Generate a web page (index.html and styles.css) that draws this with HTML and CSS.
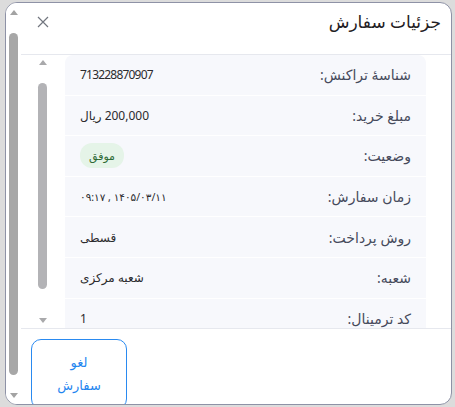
FILE: index.html
```html
<!DOCTYPE html>
<html lang="fa">
<head>
<meta charset="utf-8">
<title>جزئیات سفارش</title>
<link rel="stylesheet" href="styles.css">
</head>
<body>
<div class="dialog">
  <div class="vscroll vscroll-outer" aria-hidden="true">
    <span class="sb-up"></span>
    <span class="sb-thumb"></span>
    <span class="sb-down"></span>
  </div>
  <div class="dlg-content" dir="rtl">
    <div class="dlg-header">
      <h2 class="dlg-title">جزئیات سفارش</h2>
      <button class="close-btn" aria-label="بستن">
        <svg width="12" height="12" viewBox="0 0 12 12"><path d="M1 1 L11 11 M11 1 L1 11" stroke="#72767f" stroke-width="1.2" fill="none"/></svg>
      </button>
    </div>
    <div class="dlg-body" dir="ltr">
      <div class="vscroll vscroll-inner" aria-hidden="true">
        <span class="sb-up"></span>
        <span class="sb-thumb"></span>
        <span class="sb-down"></span>
      </div>
      <div class="body-view" dir="rtl">
        <div class="rows">
          <div class="row"><span class="label">شناسهٔ تراکنش:</span><span class="value value-id">713228870907</span></div>
          <div class="row"><span class="label">مبلغ خرید:</span><span class="value">200,000 ریال</span></div>
          <div class="row"><span class="label">وضعیت:</span><span class="badge">موفق</span></div>
          <div class="row"><span class="label">زمان سفارش:</span><span class="value value-date">۱۴۰۵/۰۳/۱۱ , ۰۹:۱۷</span></div>
          <div class="row"><span class="label">روش پرداخت:</span><span class="value">قسطی</span></div>
          <div class="row"><span class="label">شعبه:</span><span class="value">شعبه مرکزی</span></div>
          <div class="row"><span class="label">کد ترمینال:</span><span class="value">1</span></div>
        </div>
      </div>
    </div>
    <div class="dlg-footer">
      <button class="cancel-btn">لغو سفارش</button>
    </div>
  </div>
</div>
</body>
</html>
```

FILE: styles.css
```css
* { box-sizing: border-box; }
html, body { margin: 0; }
body {
  background: #dcdcdc;
  padding: 2px 3px 0 5px;
  height: 407px;
  overflow: hidden;
  font-family: "Noto Sans", "DejaVu Sans", sans-serif;
}
.dialog {
  width: 447px;
  height: 403px;
  background: #fff;
  border: 1px solid #8e92a6;
  border-radius: 12px;
  overflow: hidden;
  display: flex;
}

/* drawn scrollbars */
.vscroll {
  width: 15px;
  flex: none;
  display: flex;
  flex-direction: column;
  align-items: center;
  background: #fff;
}
.sb-up, .sb-down {
  width: 0;
  height: 0;
  border-left: 4.5px solid transparent;
  border-right: 4.5px solid transparent;
}
.sb-up { border-bottom: 5px solid #a3a3a3; }
.sb-down { border-top: 5px solid #a3a3a3; margin-top: auto; }
.sb-thumb {
  width: 9px;
  border-radius: 4.5px;
  background: #a7a7a7;
}
.vscroll-outer .sb-up { margin-top: 7px; }
.vscroll-outer .sb-thumb { margin-top: 18px; height: 342px; }
.vscroll-outer .sb-down { margin-bottom: 6px; }
.vscroll-inner .sb-up { margin-top: 5px; border-bottom-color: #a9a9ab; }
.vscroll-inner .sb-thumb { margin-top: 18px; height: 206px; background: #b3b3b6; }
.vscroll-inner .sb-down { margin-bottom: 5px; border-top-color: #a9a9ab; }

.dlg-content {
  flex: 1;
  min-width: 0;
  overflow: hidden;
  display: flex;
  flex-direction: column;
}
.dlg-header {
  display: flex;
  align-items: center;
  justify-content: space-between;
  padding: 7px 10px 20px 16px;
  border-bottom: 1px solid #e6e8ee;
  flex: none;
}
.dlg-title {
  margin: 0;
  font-size: 17px;
  line-height: 24px;
  font-weight: 400;
  color: #1f2024;
}
.close-btn {
  border: 0;
  background: none;
  padding: 0;
  width: 12px;
  height: 12px;
  display: flex;
}
.dlg-body {
  height: 273px;
  flex: none;
  margin: 0 14px;
  display: flex;
}
.body-view {
  flex: 1;
  min-width: 0;
  overflow: hidden;
}
.rows {
  margin: 0 11px 0 15px;
  background: #f7f8fc;
  border-radius: 8px;
}
.row {
  height: 40.6px;
  display: flex;
  align-items: center;
  justify-content: space-between;
  padding: 0 15px;
  border-bottom: 1px solid #ffffff;
}
.label {
  font-size: 14px;
  color: #464a5b;
}
.value {
  font-size: 12px;
  color: #2b2b2e;
}
.value-id { letter-spacing: -0.8px; }
.value-date { font-size: 10.5px; }
.badge {
  font-size: 11px;
  color: #2e6b35;
  background: #e5f4e8;
  border-radius: 12px;
  padding: 0 9px;
  line-height: 25px;
}
.dlg-footer {
  border-top: 1px solid #e6e8ee;
  padding: 10px 10px 11px;
  display: flex;
  justify-content: flex-end;
  flex: none;
}
.cancel-btn {
  width: 96px;
  height: 70px;
  padding: 11px 18px;
  border: 1px solid #2a8af0;
  border-radius: 10px;
  background: #fff;
  color: #1f86ef;
  font-family: inherit;
  font-size: 13px;
  line-height: 23px;
}
```
